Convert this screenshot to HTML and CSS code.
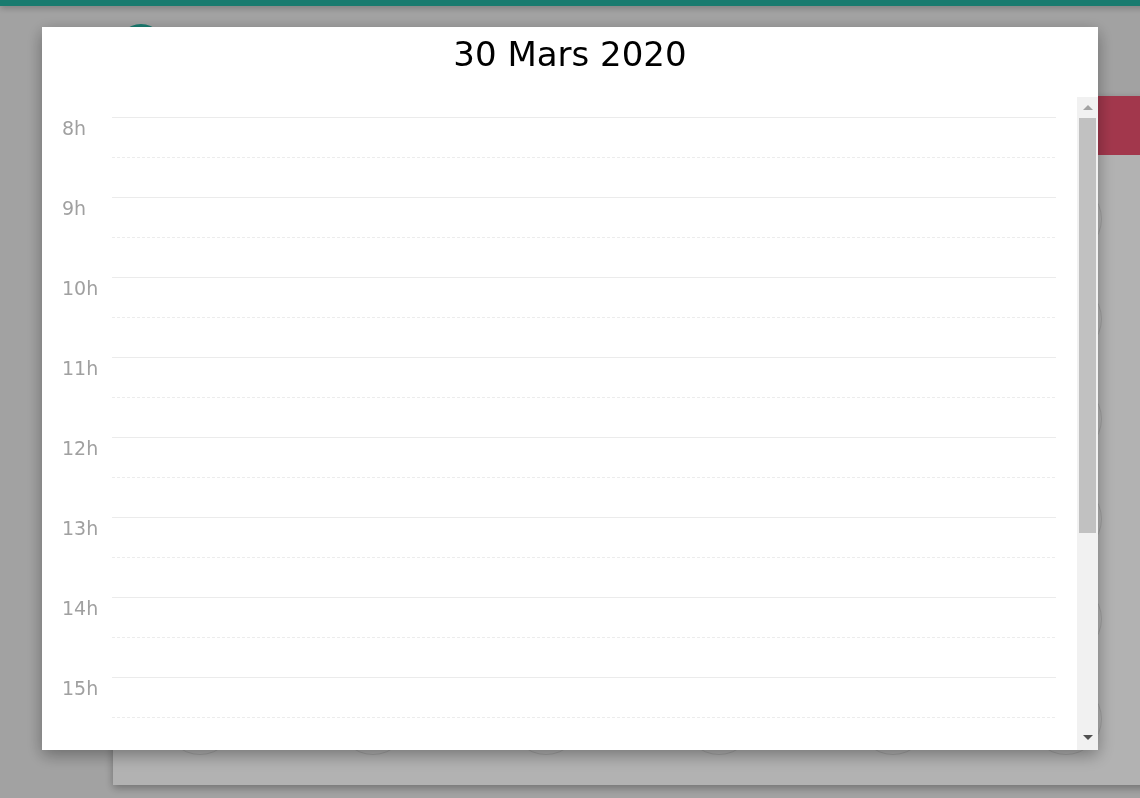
FILE: index.html
```html
<!DOCTYPE html>
<html lang="fr">
<head>
<meta charset="utf-8">
<title>Agenda</title>
<link rel="stylesheet" href="styles.css">
</head>
<body>
<div class="topbar"></div>
<header class="header"><div class="logo"></div></header>
<main class="calendar">
  <div class="calendar-head"></div>
  <div class="days">
    <div class="day"><span class="dot"></span></div><div class="day"><span class="dot"></span></div><div class="day"><span class="dot"></span></div><div class="day"><span class="dot"></span></div><div class="day"><span class="dot"></span></div><div class="day"><span class="dot"></span></div><div class="day"><span class="dot"></span></div>
    <div class="day"><span class="dot"></span></div><div class="day"><span class="dot"></span></div><div class="day"><span class="dot"></span></div><div class="day"><span class="dot"></span></div><div class="day"><span class="dot"></span></div><div class="day"><span class="dot"></span></div><div class="day"><span class="dot"></span></div>
    <div class="day"><span class="dot"></span></div><div class="day"><span class="dot"></span></div><div class="day"><span class="dot"></span></div><div class="day"><span class="dot"></span></div><div class="day"><span class="dot"></span></div><div class="day"><span class="dot"></span></div><div class="day"><span class="dot"></span></div>
    <div class="day"><span class="dot"></span></div><div class="day"><span class="dot"></span></div><div class="day"><span class="dot"></span></div><div class="day"><span class="dot"></span></div><div class="day"><span class="dot"></span></div><div class="day"><span class="dot"></span></div><div class="day"><span class="dot"></span></div>
    <div class="day"><span class="dot"></span></div><div class="day"><span class="dot"></span></div><div class="day"><span class="dot"></span></div><div class="day"><span class="dot"></span></div><div class="day"><span class="dot"></span></div><div class="day"><span class="dot"></span></div><div class="day"><span class="dot"></span></div>
    <div class="day"><span class="dot"></span></div><div class="day"><span class="dot"></span></div><div class="day"><span class="dot"></span></div><div class="day"><span class="dot"></span></div><div class="day"><span class="dot"></span></div><div class="day"><span class="dot"></span></div><div class="day"><span class="dot"></span></div>
  </div>
</main>

<div class="overlay">
  <section class="modal">
    <h1 class="modal-title">30 Mars 2020</h1>
    <div class="modal-body">
      <div class="schedule">
        <div class="hour"><div class="hour-label">8h</div><div class="slot"><div class="half"></div></div></div>
        <div class="hour"><div class="hour-label">9h</div><div class="slot"><div class="half"></div></div></div>
        <div class="hour"><div class="hour-label">10h</div><div class="slot"><div class="half"></div></div></div>
        <div class="hour"><div class="hour-label">11h</div><div class="slot"><div class="half"></div></div></div>
        <div class="hour"><div class="hour-label">12h</div><div class="slot"><div class="half"></div></div></div>
        <div class="hour"><div class="hour-label">13h</div><div class="slot"><div class="half"></div></div></div>
        <div class="hour"><div class="hour-label">14h</div><div class="slot"><div class="half"></div></div></div>
        <div class="hour"><div class="hour-label">15h</div><div class="slot"><div class="half"></div></div></div>
      </div>
      <div class="scrollbar" aria-hidden="true">
        <div class="scroll-btn"><span class="arrow-up"></span></div>
        <div class="scroll-thumb"></div>
        <div class="scroll-btn scroll-btn-down"><span class="arrow-down"></span></div>
      </div>
    </div>
  </section>
</div>
</body>
</html>
```
FILE: styles.css
```css
html, body {
  margin: 0;
  padding: 0;
  overflow: hidden;
  height: 100%;
}
body {
  background: #e9e9e9;
  font-family: "DejaVu Sans", "Liberation Sans", sans-serif;
  width: 1400px;
}
.topbar {
  height: 6px;
  background: #25b0a0;
  box-shadow: 0 2px 6px rgba(0,0,0,0.25);
  position: relative;
}
.header {
  height: 74px;
  box-sizing: border-box;
  padding: 18px 0 0 116px;
}
.logo {
  width: 50px;
  height: 50px;
  border-radius: 50%;
  background: #25b0a0;
}
.calendar {
  margin: 16px 0 0 113px;
  width: 1213px;
  background: #fff;
  box-shadow: 0 3px 8px rgba(0,0,0,0.3);
  padding-bottom: 16px;
}
.calendar-head {
  height: 59px;
  background: #e9506e;
}
.days {
  margin-top: 14px;
  display: grid;
  grid-template-columns: repeat(7, 1fr);
  grid-auto-rows: 100px;
}
.day {
  display: flex;
  align-items: center;
  justify-content: center;
}
.dot {
  width: 70px;
  height: 70px;
  border-radius: 50%;
  border: 1px solid #e4e4e4;
}
.overlay {
  position: fixed;
  inset: 0;
  background: rgba(0,0,0,0.3);
  display: flex;
  justify-content: center;
  align-items: flex-start;
  padding-top: 27px;
}
.modal {
  width: 1056px;
  height: 723px;
  background: #fff;
  box-shadow: 0 5px 16px rgba(0,0,0,0.35);
  display: flex;
  flex-direction: column;
}
.modal-title {
  margin: 0;
  height: 70px;
  box-sizing: border-box;
  padding-top: 7px;
  line-height: 40px;
  font-size: 34px;
  font-weight: normal;
  text-align: center;
  color: #000;
  flex: none;
}
.modal-body {
  flex: 1;
  min-height: 0;
  display: flex;
}
.schedule {
  flex: 1;
  overflow: hidden;
  padding: 20px 21px 0 0;
}
.scrollbar {
  width: 21px;
  flex: none;
  background: #f1f1f1;
  display: flex;
  flex-direction: column;
}
.scroll-btn {
  height: 21px;
  flex: none;
  display: flex;
  justify-content: center;
}
.scroll-btn-down {
  margin-top: auto;
}
.arrow-up {
  margin-top: 8px;
  width: 0;
  height: 0;
  border-left: 5px solid transparent;
  border-right: 5px solid transparent;
  border-bottom: 5px solid #a3a3a3;
}
.arrow-down {
  margin-top: 6px;
  width: 0;
  height: 0;
  border-left: 5px solid transparent;
  border-right: 5px solid transparent;
  border-top: 5px solid #505050;
}
.scroll-thumb {
  height: 415px;
  margin: 0 2px;
  background: #c1c1c1;
}
.hour {
  display: grid;
  grid-template-columns: 70px 1fr;
  height: 80px;
}
.hour-label {
  padding: 2px 0 0 20px;
  font-size: 19px;
  line-height: 1;
  color: #a0a0a0;
}
.slot {
  border-top: 1px solid #ebebeb;
}
.half {
  margin-top: 39px;
  height: 1px;
  background: repeating-linear-gradient(to right, #ececec 0 3px, transparent 3px 5px);
}
```
